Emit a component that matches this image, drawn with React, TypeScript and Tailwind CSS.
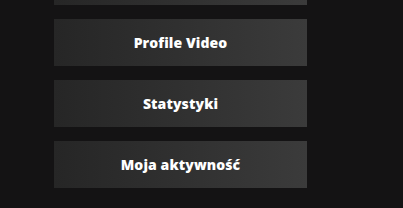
const items = ['', 'Profile Video', 'Statystyki', 'Moja aktywność'];

export default function App() {
    return (
        <div className="h-[208px] w-[403px] overflow-hidden bg-[#141314]">
            <div className="ml-[54px] mt-[-42px] flex w-[253px] flex-col gap-[14px]">
                {items.map((label, i) => (
                    <button
                        key={i}
                        className="flex h-[47px] items-center justify-center bg-gradient-to-r from-[#262626] to-[#3b3b3b] pb-[1px] font-['Open_Sans',sans-serif] text-[14px] font-extrabold tracking-[0.1px] text-white"
                    >
                        {label}
                    </button>
                ))}
            </div>
        </div>
    );
}
